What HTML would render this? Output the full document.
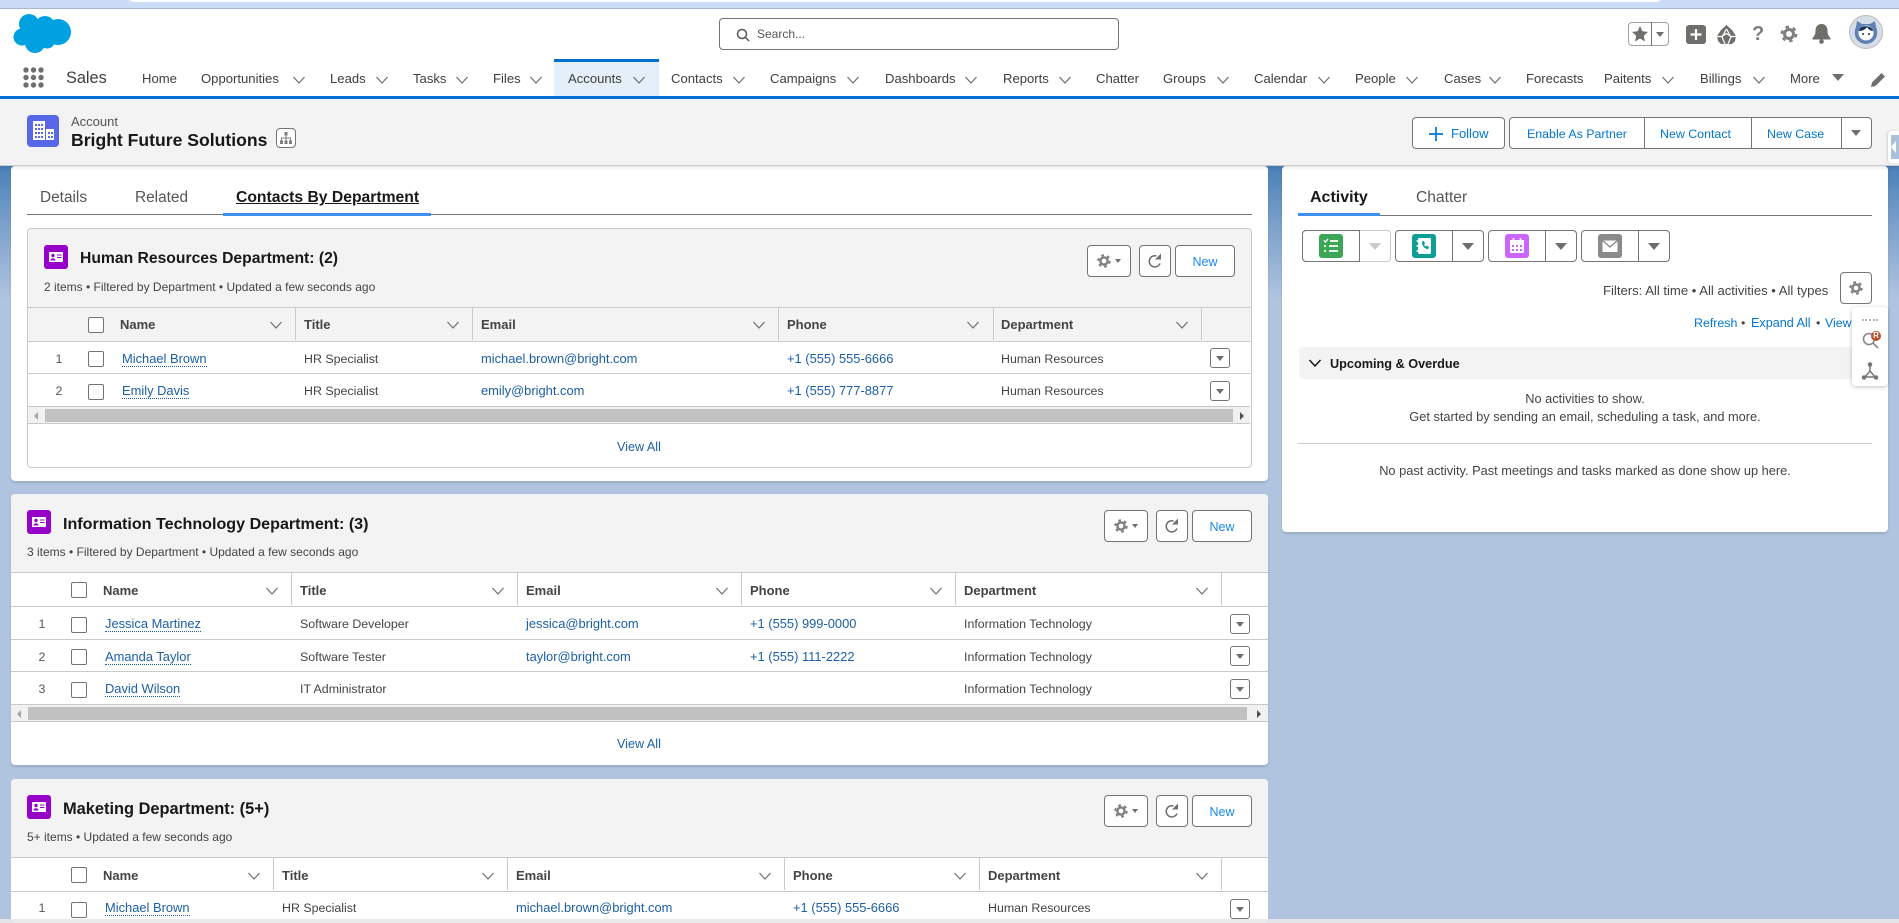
<!DOCTYPE html>
<html lang="en"><head><meta charset="utf-8"><title>Bright Future Solutions</title>
<style>
html,body{margin:0;padding:0;width:1899px;height:923px;overflow:hidden}
body{position:relative;font-family:"Liberation Sans",sans-serif;color:#444;background:linear-gradient(180deg,#4a80b8 166px,#7fa3cc 230px,#b0c4df 300px)}
.p{position:absolute}
.t{position:absolute;white-space:nowrap;line-height:20px;height:20px}
.nv{font-size:13.1px;color:#3e3e3c;top:69px}
.h{font-size:13px;font-weight:bold;color:#444}
.b{font-size:12.4px;color:#444}
.l{font-size:12.9px;color:#1b5fa8}
.va{font-size:12.6px;color:#1b5fa8}
.u{position:absolute;white-space:nowrap;line-height:14px;height:14px;font-size:12.9px;color:#1b5fa8;border-bottom:1px dotted #1b5fa8}
.n{font-size:12.4px;color:#555;width:20px;text-align:center}
.c{position:absolute;width:14px;height:14px;border:1px solid #747474;border-radius:2px;background:#fff}
.d{position:absolute;width:1px;background:#c9c9c9}
.hl{position:absolute;height:1px;background:#c9c9c9}
.m{position:absolute;width:18px;height:18px;border:1px solid #747474;border-radius:3px;background:#fff}
.m:after{content:"";position:absolute;left:5px;top:7px;border:4px solid transparent;border-top:5px solid #706e6b;border-bottom:0}
.tri{position:absolute;border:6px solid transparent;border-top:7px solid #706e6b;border-bottom:0}
.ch{position:absolute;width:14px;height:14px;fill:none;stroke:#706e6b;stroke-width:1.2}
.btn{position:absolute;box-sizing:border-box;border:1px solid #747474;border-radius:4px;background:#fff}
.card{position:absolute;background:#fff;border-radius:4px;box-shadow:0 2px 2px rgba(0,0,0,.12)}
.gray{position:absolute;background:#f3f3f3}
.a{color:#0176d3}
.sub{font-size:12px;color:#444}
.tt{font-size:16px;font-weight:bold;color:#181818}
.lb{font-size:12.5px;color:#1589ee;text-align:center}
.g{font-size:12.8px;color:#444;text-align:center}
svg{position:absolute;overflow:visible}
</style></head><body>
<svg width="0" height="0" style="position:absolute"><defs>
<symbol id="chev" viewBox="0 0 14 14"><path d="M1.5 4 7 10l5.500-6"/></symbol>
<symbol id="gear" viewBox="0 0 20 20"><circle cx="10" cy="10" r="4.500" fill="none" stroke="#807e7b" stroke-width="3"/><circle cx="10" cy="10" r="7.200" fill="none" stroke="#807e7b" stroke-width="2.400" stroke-dasharray="3.500 4.040"/></symbol>
<symbol id="contact" viewBox="0 0 24 24"><rect width="24" height="24" rx="3" fill="#9602c7"/><rect x="5" y="7" width="14" height="10" rx="1" fill="#fff"/><circle cx="9" cy="10.500" r="1.700" fill="#9602c7"/><path d="M6.500 15.500c0-3 5-3 5 0z" fill="#9602c7"/><path d="M13 10h4.500M13 12.500h4.500" stroke="#9602c7" stroke-width="1.100"/></symbol>
<symbol id="refresh" viewBox="0 0 16 16"><path d="M13 10.500A5.600 5.600 0 1 1 9.500 3" fill="none" stroke="#706e6b" stroke-width="1.500"/><path d="M14 .5V6.500H8z" fill="#706e6b"/></symbol>
</defs></svg>

<!-- top strip -->
<div class="p" style="left:0;top:0;width:1899px;height:8px;background:#cbdcf6"></div>
<div class="p" style="left:128px;top:-6px;width:1534px;height:8px;background:#fff;border-radius:0 0 6px 6px"></div>
<div class="p" style="left:0;top:8px;width:1899px;height:1px;background:#a6b6cf"></div>
<!-- header -->
<div class="p" style="left:0;top:9px;width:1899px;height:87px;background:#fff"></div>
<svg style="left:0;top:0" width="80" height="60" fill="#00a1e0"><circle cx="29" cy="24" r="10"/><circle cx="45" cy="26" r="10"/><circle cx="58" cy="32" r="13"/><circle cx="22" cy="37" r="8.500"/><circle cx="35" cy="43" r="10"/><circle cx="47" cy="40" r="8.500"/><circle cx="38" cy="32" r="13"/><rect x="25" y="25" width="30" height="16"/></svg>
<div class="btn" style="left:719px;top:18px;width:400px;height:32px;border-radius:4px"></div>
<svg style="left:736px;top:28px" width="14" height="14" fill="none" stroke="#555" stroke-width="1.500"><circle cx="6" cy="6" r="4.500"/><path d="M9.500 9.500 13 13"/></svg>
<div class="t" style="left:757px;top:24px;font-size:12px;color:#555">Search...</div>

<div class="btn" style="left:1628px;top:22px;width:41px;height:24px;border-color:#a0a0a0"></div>
<div class="p" style="left:1651px;top:22px;width:1px;height:24px;background:#747474"></div>
<svg style="left:1632px;top:26px" width="16" height="16" fill="#706e6b"><path d="M8 0l2.400 5.300 5.600.6-4.200 3.800L13 15.500 8 12.500 3 15.500l1.200-5.800L0 5.900l5.600-.6z"/></svg>
<div class="tri" style="left:1656px;top:32px;border-width:4px;border-top-width:5px"></div>
<div class="p" style="left:1686px;top:25px;width:20px;height:19px;border-radius:3px;background:#706e6b"></div>
<svg style="left:1686px;top:25px" width="20" height="19" stroke="#fff" stroke-width="2.200"><path d="M10 4v11M4.500 9.500h11"/></svg>
<svg style="left:1716px;top:25px" width="21" height="19" fill="#706e6b"><path d="M10.500 0 16 5l4 6-1 5-3 3H5l-3-3-1-5 4-6z"/><path d="M10.500 4 15 12l-3 7M10.500 4 6 12l3 7M1 11.500h5l4.500-3 4.500 3h5" stroke="#fff" stroke-width="1.200" fill="none"/></svg>
<div class="t" style="left:1752px;top:24px;font-size:20px;font-weight:bold;color:#807e7b">?</div>
<svg style="left:1779px;top:24px" width="20" height="20"><use href="#gear"/></svg>
<svg style="left:1811px;top:24px" width="21" height="20" fill="#706e6b"><path d="M10.500 0c4 0 6 3 6 6.500 0 4 1 5.500 3 7.500v1.500h-18V14c2-2 3-3.500 3-7.500C4.500 3 6.500 0 10.500 0z"/><circle cx="10.500" cy="17.500" r="2.300"/></svg>
<svg style="left:1849px;top:15px" width="34" height="34"><circle cx="17" cy="17" r="16.500" fill="#d5dde8" stroke="#bbb"/><path d="M7 12 8 6l5 3h8l5-3 1 6c3 6 1 16-10 17C6 28 4 18 7 12z" fill="#5f81b3"/><circle cx="17" cy="18" r="7.500" fill="#fff"/><path d="M10 16c3 0 6-1 8-4 2 3 4 4 6 4-1-6-13-7-14 0z" fill="#16325c"/><circle cx="14" cy="19" r="1" fill="#16325c"/><circle cx="20" cy="19" r="1" fill="#16325c"/></svg>
<!-- nav -->
<svg style="left:23px;top:67px" width="21" height="21" fill="#706e6b"><circle cx="3" cy="3" r="2.700"/><circle cx="10.500" cy="3" r="2.700"/><circle cx="18" cy="3" r="2.700"/><circle cx="3" cy="10.500" r="2.700"/><circle cx="10.500" cy="10.500" r="2.700"/><circle cx="18" cy="10.500" r="2.700"/><circle cx="3" cy="18" r="2.700"/><circle cx="10.500" cy="18" r="2.700"/><circle cx="18" cy="18" r="2.700"/></svg>
<div class="t" style="left:66px;top:68px;font-size:16.300px;color:#3e3e3c">Sales</div>
<div class="p" style="left:554px;top:59px;width:105px;height:37px;background:#e4eff9"></div>
<div class="p" style="left:554px;top:59px;width:105px;height:3px;background:#0070d2"></div>
<div class="p" style="left:0;top:96px;width:1899px;height:3px;background:#0070d2"></div>
<div class="t nv" style="left:142px">Home</div>
<div class="t nv" style="left:201px">Opportunities</div><svg class="ch" style="left:292px;top:73px"><use href="#chev"/></svg>
<div class="t nv" style="left:330px">Leads</div><svg class="ch" style="left:375px;top:73px"><use href="#chev"/></svg>
<div class="t nv" style="left:413px">Tasks</div><svg class="ch" style="left:455px;top:73px"><use href="#chev"/></svg>
<div class="t nv" style="left:493px">Files</div><svg class="ch" style="left:529px;top:73px"><use href="#chev"/></svg>
<div class="t nv" style="left:568px">Accounts</div><svg class="ch" style="left:632px;top:73px"><use href="#chev"/></svg>
<div class="t nv" style="left:671px">Contacts</div><svg class="ch" style="left:732px;top:73px"><use href="#chev"/></svg>
<div class="t nv" style="left:770px">Campaigns</div><svg class="ch" style="left:846px;top:73px"><use href="#chev"/></svg>
<div class="t nv" style="left:885px">Dashboards</div><svg class="ch" style="left:964px;top:73px"><use href="#chev"/></svg>
<div class="t nv" style="left:1003px">Reports</div><svg class="ch" style="left:1058px;top:73px"><use href="#chev"/></svg>
<div class="t nv" style="left:1096px">Chatter</div>
<div class="t nv" style="left:1163px">Groups</div><svg class="ch" style="left:1216px;top:73px"><use href="#chev"/></svg>
<div class="t nv" style="left:1254px">Calendar</div><svg class="ch" style="left:1317px;top:73px"><use href="#chev"/></svg>
<div class="t nv" style="left:1355px">People</div><svg class="ch" style="left:1405px;top:73px"><use href="#chev"/></svg>
<div class="t nv" style="left:1444px">Cases</div><svg class="ch" style="left:1488px;top:73px"><use href="#chev"/></svg>
<div class="t nv" style="left:1526px">Forecasts</div>
<div class="t nv" style="left:1604px">Paitents</div><svg class="ch" style="left:1661px;top:73px"><use href="#chev"/></svg>
<div class="t nv" style="left:1700px">Billings</div><svg class="ch" style="left:1752px;top:73px"><use href="#chev"/></svg>
<div class="t nv" style="left:1790px">More</div>
<div class="tri" style="left:1832px;top:74px;border-width:6px;border-top-width:7px"></div>
<svg style="left:1871px;top:72px" width="14" height="15" fill="#706e6b"><path d="M0 15l1-4.500L10.500 1l3.500 3.500L4.500 14z"/></svg>

<!-- page header -->
<div class="p" style="left:0;top:99px;width:1899px;height:66px;background:#f3f3f3;border-bottom:1px solid #c9c9c9;box-shadow:0 2px 3px rgba(0,0,0,.08);z-index:2"></div>
<div style="position:absolute;left:0;top:0;z-index:3">
<div class="p" style="left:27px;top:115px;width:32px;height:32px;border-radius:4px;background:#5867e8"></div>
<svg style="left:27px;top:115px" width="32" height="32" fill="#fff"><path d="M6 6h12v19H6z"/><path d="M19 14h8v11h-8z"/><g fill="#5867e8"><rect x="8" y="9" width="2" height="2"/><rect x="11" y="9" width="2" height="2"/><rect x="14" y="9" width="2" height="2"/><rect x="8" y="13" width="2" height="2"/><rect x="11" y="13" width="2" height="2"/><rect x="14" y="13" width="2" height="2"/><rect x="8" y="17" width="2" height="2"/><rect x="11" y="17" width="2" height="2"/><rect x="14" y="17" width="2" height="2"/><rect x="8" y="21" width="2" height="2"/><rect x="11" y="21" width="2" height="2"/><rect x="14" y="21" width="2" height="2"/><rect x="21" y="17" width="2" height="2"/><rect x="24" y="17" width="2" height="2"/><rect x="21" y="21" width="2" height="2"/><rect x="24" y="21" width="2" height="2"/></g></svg>
<div class="t" style="left:71px;top:112px;font-size:13px;color:#555">Account</div>
<div class="t" style="left:71px;top:130px;font-size:17.600px;font-weight:bold;color:#181818">Bright Future Solutions</div>
<div class="btn" style="left:276px;top:128px;width:20px;height:20px"></div>
<svg style="left:280px;top:132px" width="12" height="12" fill="#807e7b"><rect x="4.500" y="0" width="3" height="3.500"/><rect x="0" y="8.500" width="3" height="3.500"/><rect x="4.500" y="8.500" width="3" height="3.500"/><rect x="9" y="8.500" width="3" height="3.500"/><path d="M5.500 3.500h1V5.500h4.500v3h-1v-2H6.500v2h-1v-2H2v2H1v-3h4.500z"/></svg>

<div class="btn" style="left:1412px;top:117px;width:93px;height:32px"></div>
<svg style="left:1429px;top:126px" width="14" height="16" stroke="#0176d3" stroke-width="1.700"><path d="M7 1v14M0 8h14"/></svg>
<div class="t a" style="left:1451px;top:124px;font-size:13px">Follow</div>
<div class="btn" style="left:1509px;top:117px;width:363px;height:32px"></div>
<div class="p" style="left:1644px;top:117px;width:1px;height:32px;background:#747474"></div>
<div class="p" style="left:1751px;top:117px;width:1px;height:32px;background:#747474"></div>
<div class="p" style="left:1841px;top:117px;width:1px;height:32px;background:#747474"></div>
<div class="t a" style="left:1527px;top:124px;font-size:12.400px">Enable As Partner</div>
<div class="t a" style="left:1660px;top:124px;font-size:12.400px">New Contact</div>
<div class="t a" style="left:1767px;top:124px;font-size:12.400px">New Case</div>
<div class="tri" style="left:1851px;top:130px;border-width:5px;border-top-width:6px"></div>
<div class="p" style="left:1888px;top:131px;width:11px;height:32px;background:#fff;border-radius:4px 0 0 4px;box-shadow:-1px 0 2px rgba(0,0,0,.15)"></div>
<div class="p" style="left:1891px;top:135px;width:8px;height:24px;background:#a9c0dd"></div>
<svg style="left:1891px;top:141px" width="6" height="12" fill="#fff"><path d="M5 0 0 6l5 6z"/></svg>
</div>

<!-- card 1 -->
<div class="card" style="left:11px;top:166px;width:1257px;height:315px"></div>
<div class="t" style="left:40px;top:188px;font-size:15.400px;color:#555">Details</div>
<div class="t" style="left:135px;top:188px;font-size:15.400px;color:#555">Related</div>
<div class="t" style="left:236px;top:188px;font-size:15.700px;font-weight:bold;color:#181818;text-decoration:underline">Contacts By Department</div>
<div class="p" style="left:27px;top:214px;width:1225px;height:1px;background:#747474"></div>
<div class="p" style="left:223px;top:213px;width:208px;height:3px;background:#3d8ff0"></div>
<div class="p" style="left:27px;top:228px;width:1223px;height:238px;border:1px solid #c9c9c9;border-radius:4px;overflow:hidden;background:#fff">
  <div class="gray" style="left:0;top:0;width:1223px;height:113px"></div>
</div>
<svg style="left:44px;top:245px" width="24" height="24"><use href="#contact"/></svg>
<div class="t tt" style="left:80px;top:249px;font-size:15.700px">Human Resources Department: (2)</div>
<div class="t sub" style="left:44px;top:277px">2 items • Filtered by Department • Updated a few seconds ago</div>
<div class="btn" style="left:1087px;top:245px;width:44px;height:32px"></div>
<svg style="left:1096px;top:253px" width="16" height="16"><use href="#gear"/></svg>
<div class="tri" style="left:1115px;top:259px;border-width:3.500px;border-top-width:4px"></div>
<div class="btn" style="left:1139px;top:245px;width:32px;height:32px"></div>
<svg style="left:1147px;top:253px" width="16" height="16"><use href="#refresh"/></svg>
<div class="btn" style="left:1175px;top:245px;width:60px;height:32px"></div>
<div class="t lb" style="left:1175px;top:252px;width:60px">New</div>
<div class="hl" style="left:28px;top:307px;width:1222px"></div>
<div class="hl" style="left:28px;top:341px;width:1222px"></div>
<div class="hl" style="left:28px;top:373px;width:1222px"></div>
<div class="hl" style="left:28px;top:406px;width:1222px"></div>
<div class="hl" style="left:28px;top:423px;width:1222px"></div>
<div class="p" style="left:28px;top:407px;width:1222px;height:16px;background:#f1f1f1"></div>
<div class="p" style="left:45px;top:409px;width:1188px;height:13px;background:#c1c1c1"></div>
<svg style="left:34px;top:412px" width="5" height="8" fill="#a3a3a3"><path d="M4 0 0 4l4 4z"/></svg>
<svg style="left:1240px;top:412px" width="5" height="8" fill="#505050"><path d="M0 0l4 4-4 4z"/></svg>
<div class="c" style="left:88px;top:317px"></div>
<div class="t h" style="left:120px;top:315px">Name</div><svg class="ch" style="left:269px;top:318px"><use href="#chev"/></svg><div class="d" style="left:295px;top:308px;height:32px"></div>
<div class="t h" style="left:304px;top:315px">Title</div><svg class="ch" style="left:446px;top:318px"><use href="#chev"/></svg><div class="d" style="left:472px;top:308px;height:32px"></div>
<div class="t h" style="left:481px;top:315px">Email</div><svg class="ch" style="left:752px;top:318px"><use href="#chev"/></svg><div class="d" style="left:778px;top:308px;height:32px"></div>
<div class="t h" style="left:787px;top:315px">Phone</div><svg class="ch" style="left:966px;top:318px"><use href="#chev"/></svg><div class="d" style="left:993px;top:308px;height:32px"></div>
<div class="t h" style="left:1001px;top:315px">Department</div><svg class="ch" style="left:1175px;top:318px"><use href="#chev"/></svg><div class="d" style="left:1201px;top:308px;height:32px"></div>
<div class="t n" style="left:49px;top:349px">1</div><div class="c" style="left:88px;top:351px"></div><div class="u" style="left:122px;top:352px">Michael Brown</div><div class="t b" style="left:304px;top:349px">HR Specialist</div><div class="t l" style="left:481px;top:349px">michael.brown@bright.com</div><div class="t l" style="left:787px;top:349px">+1 (555) 555-6666</div><div class="t b" style="left:1001px;top:349px">Human Resources</div><div class="m" style="left:1210px;top:348px"></div>
<div class="t n" style="left:49px;top:381px">2</div><div class="c" style="left:88px;top:384px"></div><div class="u" style="left:122px;top:384px">Emily Davis</div><div class="t b" style="left:304px;top:381px">HR Specialist</div><div class="t l" style="left:481px;top:381px">emily@bright.com</div><div class="t l" style="left:787px;top:381px">+1 (555) 777-8877</div><div class="t b" style="left:1001px;top:381px">Human Resources</div><div class="m" style="left:1210px;top:381px"></div>
<div class="t va" style="left:617px;top:437px">View All</div>

<!-- card 2 -->
<div class="card" style="left:11px;top:494px;width:1257px;height:271px;overflow:hidden"><div class="gray" style="left:0;top:0;width:1257px;height:78px"></div></div>
<svg style="left:27px;top:510px" width="24" height="24"><use href="#contact"/></svg>
<div class="t tt" style="left:63px;top:514px;font-size:16.100px">Information Technology Department: (3)</div>
<div class="t sub" style="left:27px;top:542px">3 items • Filtered by Department • Updated a few seconds ago</div>
<div class="btn" style="left:1104px;top:510px;width:44px;height:32px"></div>
<svg style="left:1113px;top:518px" width="16" height="16"><use href="#gear"/></svg>
<div class="tri" style="left:1132px;top:524px;border-width:3.500px;border-top-width:4px"></div>
<div class="btn" style="left:1156px;top:510px;width:32px;height:32px"></div>
<svg style="left:1164px;top:518px" width="16" height="16"><use href="#refresh"/></svg>
<div class="btn" style="left:1192px;top:510px;width:60px;height:32px"></div>
<div class="t lb" style="left:1192px;top:517px;width:60px">New</div>
<div class="hl" style="left:11px;top:572px;width:1257px"></div>
<div class="hl" style="left:11px;top:606px;width:1257px"></div>
<div class="hl" style="left:11px;top:639px;width:1257px"></div>
<div class="hl" style="left:11px;top:671px;width:1257px"></div>
<div class="hl" style="left:11px;top:704px;width:1257px"></div>
<div class="p" style="left:11px;top:705px;width:1257px;height:16px;background:#f1f1f1"></div>
<div class="hl" style="left:11px;top:721px;width:1257px"></div>
<div class="p" style="left:28px;top:707px;width:1219px;height:13px;background:#c1c1c1"></div>
<svg style="left:17px;top:710px" width="5" height="8" fill="#a3a3a3"><path d="M4 0 0 4l4 4z"/></svg>
<svg style="left:1257px;top:710px" width="5" height="8" fill="#505050"><path d="M0 0l4 4-4 4z"/></svg>
<div class="c" style="left:71px;top:582px"></div>
<div class="t h" style="left:103px;top:581px">Name</div><svg class="ch" style="left:265px;top:584px"><use href="#chev"/></svg><div class="d" style="left:291px;top:573px;height:32px"></div>
<div class="t h" style="left:300px;top:581px">Title</div><svg class="ch" style="left:491px;top:584px"><use href="#chev"/></svg><div class="d" style="left:517px;top:573px;height:32px"></div>
<div class="t h" style="left:526px;top:581px">Email</div><svg class="ch" style="left:715px;top:584px"><use href="#chev"/></svg><div class="d" style="left:741px;top:573px;height:32px"></div>
<div class="t h" style="left:750px;top:581px">Phone</div><svg class="ch" style="left:929px;top:584px"><use href="#chev"/></svg><div class="d" style="left:955px;top:573px;height:32px"></div>
<div class="t h" style="left:964px;top:581px">Department</div><svg class="ch" style="left:1195px;top:584px"><use href="#chev"/></svg><div class="d" style="left:1221px;top:573px;height:32px"></div>
<div class="t n" style="left:32px;top:614px">1</div><div class="c" style="left:71px;top:617px"></div><div class="u" style="left:105px;top:617px">Jessica Martinez</div><div class="t b" style="left:300px;top:614px">Software Developer</div><div class="t l" style="left:526px;top:614px">jessica@bright.com</div><div class="t l" style="left:750px;top:614px">+1 (555) 999-0000</div><div class="t b" style="left:964px;top:614px">Information Technology</div><div class="m" style="left:1230px;top:614px"></div>
<div class="t n" style="left:32px;top:647px">2</div><div class="c" style="left:71px;top:649px"></div><div class="u" style="left:105px;top:650px">Amanda Taylor</div><div class="t b" style="left:300px;top:647px">Software Tester</div><div class="t l" style="left:526px;top:647px">taylor@bright.com</div><div class="t l" style="left:750px;top:647px">+1 (555) 111-2222</div><div class="t b" style="left:964px;top:647px">Information Technology</div><div class="m" style="left:1230px;top:646px"></div>
<div class="t n" style="left:32px;top:679px">3</div><div class="c" style="left:71px;top:682px"></div><div class="u" style="left:105px;top:682px">David Wilson</div><div class="t b" style="left:300px;top:679px">IT Administrator</div><div class="t b" style="left:964px;top:679px">Information Technology</div><div class="m" style="left:1230px;top:679px"></div>
<div class="t va" style="left:617px;top:734px">View All</div>

<!-- card 3 -->
<div class="card" style="left:11px;top:779px;width:1257px;height:144px;overflow:hidden;box-shadow:none"><div class="gray" style="left:0;top:0;width:1257px;height:78px"></div></div>
<svg style="left:27px;top:795px" width="24" height="24"><use href="#contact"/></svg>
<div class="t tt" style="left:63px;top:799px;font-size:16.400px">Maketing Department: (5+)</div>
<div class="t sub" style="left:27px;top:827px">5+ items • Updated a few seconds ago</div>
<div class="btn" style="left:1104px;top:795px;width:44px;height:32px"></div>
<svg style="left:1113px;top:803px" width="16" height="16"><use href="#gear"/></svg>
<div class="tri" style="left:1132px;top:809px;border-width:3.500px;border-top-width:4px"></div>
<div class="btn" style="left:1156px;top:795px;width:32px;height:32px"></div>
<svg style="left:1164px;top:803px" width="16" height="16"><use href="#refresh"/></svg>
<div class="btn" style="left:1192px;top:795px;width:60px;height:32px"></div>
<div class="t lb" style="left:1192px;top:802px;width:60px">New</div>
<div class="hl" style="left:11px;top:857px;width:1257px"></div>
<div class="hl" style="left:11px;top:891px;width:1257px"></div>
<div class="c" style="left:71px;top:867px"></div>
<div class="t h" style="left:103px;top:866px">Name</div><svg class="ch" style="left:247px;top:869px"><use href="#chev"/></svg><div class="d" style="left:273px;top:858px;height:32px"></div>
<div class="t h" style="left:282px;top:866px">Title</div><svg class="ch" style="left:481px;top:869px"><use href="#chev"/></svg><div class="d" style="left:507px;top:858px;height:32px"></div>
<div class="t h" style="left:516px;top:866px">Email</div><svg class="ch" style="left:758px;top:869px"><use href="#chev"/></svg><div class="d" style="left:784px;top:858px;height:32px"></div>
<div class="t h" style="left:793px;top:866px">Phone</div><svg class="ch" style="left:953px;top:869px"><use href="#chev"/></svg><div class="d" style="left:979px;top:858px;height:32px"></div>
<div class="t h" style="left:988px;top:866px">Department</div><svg class="ch" style="left:1195px;top:869px"><use href="#chev"/></svg><div class="d" style="left:1221px;top:858px;height:32px"></div>
<div class="t n" style="left:32px;top:898px">1</div><div class="c" style="left:71px;top:902px"></div><div class="u" style="left:105px;top:901px">Michael Brown</div><div class="t b" style="left:282px;top:898px">HR Specialist</div><div class="t l" style="left:516px;top:898px">michael.brown@bright.com</div><div class="t l" style="left:793px;top:898px">+1 (555) 555-6666</div><div class="t b" style="left:988px;top:898px">Human Resources</div><div class="m" style="left:1230px;top:899px"></div>

<!-- right panel -->
<div class="card" style="left:1282px;top:166px;width:606px;height:366px"></div>
<div class="t" style="left:1310px;top:188px;font-size:16px;font-weight:bold;color:#181818">Activity</div>
<div class="t" style="left:1416px;top:188px;font-size:15.600px;color:#555">Chatter</div>
<div class="p" style="left:1298px;top:215px;width:574px;height:1px;background:#747474"></div>
<div class="p" style="left:1298px;top:213px;width:82px;height:3px;background:#3d8ff0"></div>

<div class="btn" style="left:1302px;top:230px;width:89px;height:32px;border-color:#c9c9c9"></div>
<div class="p" style="left:1302px;top:230px;width:58px;height:32px;box-sizing:border-box;border:1px solid #747474;border-radius:4px 0 0 4px"></div>
<div class="tri" style="left:1369px;top:243px;border-top-color:#c9c9c9"></div>
<div class="btn" style="left:1395px;top:230px;width:89px;height:32px"></div><div class="p" style="left:1452px;top:230px;width:1px;height:32px;background:#747474"></div><div class="tri" style="left:1462px;top:243px"></div>
<div class="btn" style="left:1488px;top:230px;width:89px;height:32px"></div><div class="p" style="left:1545px;top:230px;width:1px;height:32px;background:#747474"></div><div class="tri" style="left:1555px;top:243px"></div>
<div class="btn" style="left:1581px;top:230px;width:89px;height:32px"></div><div class="p" style="left:1638px;top:230px;width:1px;height:32px;background:#747474"></div><div class="tri" style="left:1648px;top:243px"></div>
<svg style="left:1319px;top:234px" width="24" height="24"><rect width="24" height="24" rx="3" fill="#3ba755"/><path d="M5 6.500 6.500 8 9 5" fill="none" stroke="#fff" stroke-width="1.400"/><path d="M11 7h8M5 12h2M10 12h9M5 17h2M10 17h9" stroke="#fff" stroke-width="1.800"/></svg>
<svg style="left:1412px;top:234px" width="24" height="24"><rect width="24" height="24" rx="3" fill="#0b9e92"/><rect x="6" y="4" width="13" height="16" rx="1.500" fill="#fff"/><path d="M4.500 7h2M4.500 12h2M4.500 17h2" stroke="#fff" stroke-width="1.500"/><path d="M10 7.500l2-.5 1 2.500-1 1c.5 1 1 1.500 2 2l1-1 2 1.500-.7 2c-3.500.5-7-4-6.300-7.500z" fill="#0b9e92"/></svg>
<svg style="left:1505px;top:234px" width="24" height="24"><rect width="24" height="24" rx="3" fill="#cb65ff"/><rect x="5" y="6" width="14" height="13" rx="1" fill="#fff"/><rect x="5" y="6" width="14" height="3" fill="#fff"/><path d="M8.500 4v3M15.500 4v3" stroke="#fff" stroke-width="1.600"/><g fill="#cb65ff"><rect x="7" y="11" width="2" height="2"/><rect x="11" y="11" width="2" height="2"/><rect x="15" y="11" width="2" height="2"/><rect x="7" y="15" width="2" height="2"/><rect x="11" y="15" width="2" height="2"/><rect x="15" y="15" width="2" height="2"/></g></svg>
<svg style="left:1598px;top:234px" width="24" height="24"><rect width="24" height="24" rx="3" fill="#8a8a8a"/><rect x="4.500" y="6.500" width="15" height="11.500" fill="#fff"/><path d="M4.500 6.500 12 13l7.500-6.500" fill="none" stroke="#8a8a8a" stroke-width="1.400"/></svg>

<div class="t" style="left:1603px;top:281px;font-size:13.100px;color:#444">Filters: All time • All activities • All types</div>
<div class="btn" style="left:1840px;top:272px;width:32px;height:32px"></div>
<svg style="left:1848px;top:280px" width="16" height="16"><use href="#gear"/></svg>
<div class="t a" style="left:1694px;top:313px;font-size:12.400px">Refresh</div>
<div class="t" style="left:1741px;top:313px;font-size:12.400px">•</div>
<div class="t a" style="left:1751px;top:313px;font-size:12.600px">Expand All</div>
<div class="t" style="left:1816px;top:313px;font-size:12.400px">•</div>
<div class="t a" style="left:1825px;top:313px;font-size:12.400px">View All</div>
<div class="p" style="left:1299px;top:347px;width:573px;height:32px;background:#f3f3f3;border-radius:4px"></div>
<svg class="ch" style="left:1308px;top:356px;stroke:#181818;stroke-width:1.500"><use href="#chev"/></svg>
<div class="t" style="left:1330px;top:354px;font-size:12.700px;font-weight:bold;color:#181818">Upcoming &amp; Overdue</div>
<div class="t g" style="left:1298px;top:389px;width:574px">No activities to show.</div>
<div class="t g" style="left:1298px;top:407px;width:574px">Get started by sending an email, scheduling a task, and more.</div>
<div class="hl" style="left:1298px;top:443px;width:574px"></div>
<div class="t g" style="left:1298px;top:461px;width:574px">No past activity. Past meetings and tasks marked as done show up here.</div>

<!-- floating panel -->
<div class="p" style="left:1852px;top:307px;width:36px;height:79px;background:#fff;border-radius:4px;box-shadow:0 1px 4px rgba(0,0,0,.25)"></div>
<div class="p" style="left:1862px;top:319px;width:16px;height:0;border-top:2px dotted #b5b5b5"></div>
<svg style="left:1861px;top:330px" width="20" height="20" fill="none" stroke="#888" stroke-width="1.600"><circle cx="8" cy="9" r="5.500"/><path d="M12 13l5 5"/></svg>
<div class="p" style="left:1871px;top:331px;width:10px;height:10px;border-radius:50%;background:#b9522a;color:#fff;font-size:8px;font-weight:bold;line-height:10px;text-align:center">R</div>
<svg style="left:1861px;top:362px" width="18" height="18" fill="none" stroke="#777" stroke-width="1.500"><path d="M9 3v6M9 9l-5 6M9 9l5 6M5 15h8"/><circle cx="9" cy="2.500" r="1.500" fill="#777"/><circle cx="3" cy="15.500" r="1.500" fill="#777"/><circle cx="15" cy="15.500" r="1.500" fill="#777"/></svg>

<div class="p" style="left:0;top:919px;width:1899px;height:4px;background:rgba(232,232,232,.9);z-index:5"></div>
</body></html>
